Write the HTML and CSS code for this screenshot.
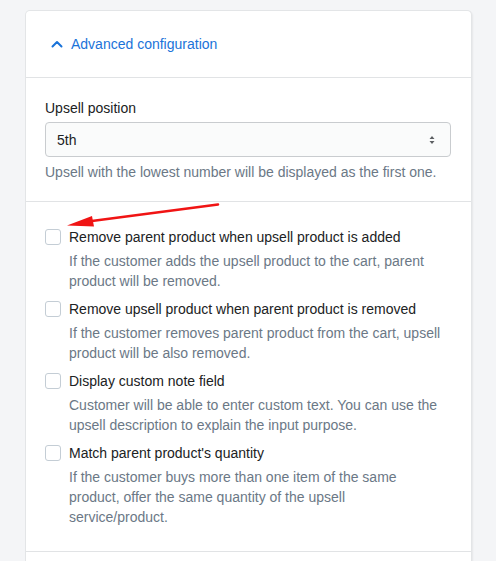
FILE: index.html
```html
<!DOCTYPE html>
<html lang="en">
<head>
<meta charset="utf-8">
<title>Advanced configuration</title>
<link rel="stylesheet" href="styles.css">
</head>
<body>
<div class="page">
  <div class="card">
    <div class="card-header">
      <button class="toggle" type="button">
        <svg class="chev" width="12" height="8" viewBox="0 0 12 8" aria-hidden="true"><path d="M1.5 6.5 L6 2 L10.5 6.5" fill="none" stroke="currentColor" stroke-width="2" stroke-linecap="round" stroke-linejoin="round"/></svg>
        <span>Advanced configuration</span>
      </button>
    </div>
    <div class="section">
      <label class="field-label">Upsell position</label>
      <div class="select">
        <span class="select-value">5th</span>
        <svg class="select-arrows" width="8" height="10" viewBox="0 0 8 10" aria-hidden="true"><path d="M4 1 L6.5 4 H1.5 Z M4 9 L1.5 6 H6.5 Z" fill="#5c5f62"/></svg>
      </div>
      <p class="help">Upsell with the lowest number will be displayed as the first one.</p>
    </div>
    <div class="section options">
      <div class="option">
        <div class="option-row"><span class="checkbox"></span><span class="option-label">Remove parent product when upsell product is added</span></div>
        <p class="option-help">If the customer adds the upsell product to the cart, parent product will be removed.</p>
      </div>
      <div class="option">
        <div class="option-row"><span class="checkbox"></span><span class="option-label">Remove upsell product when parent product is removed</span></div>
        <p class="option-help">If the customer removes parent product from the cart, upsell product will be also removed.</p>
      </div>
      <div class="option">
        <div class="option-row"><span class="checkbox"></span><span class="option-label">Display custom note field</span></div>
        <p class="option-help">Customer will be able to enter custom text. You can use the upsell description to explain the input purpose.</p>
      </div>
      <div class="option">
        <div class="option-row"><span class="checkbox"></span><span class="option-label">Match parent product's quantity</span></div>
        <p class="option-help narrow">If the customer buys more than one item of the same product, offer the same quantity of the upsell service/product.</p>
      </div>
    </div>
    <div class="section empty"></div>
  </div>
  <svg class="annot" width="496" height="561" viewBox="0 0 496 561" aria-hidden="true">
    <line x1="218" y1="204.5" x2="88" y2="221.5" stroke="#f01414" stroke-width="2.6" stroke-linecap="round"/>
    <path d="M67 225.5 L92 216 L94 226.5 Z" fill="#f01414"/>
  </svg>
</div>
</body>
</html>
```
FILE: styles.css
```css
html, body {
  margin: 0;
  padding: 0;
  background: #f4f5f7;
}
body {
  font-family: "Liberation Sans", Arial, sans-serif;
  font-size: 14px;
  line-height: 20px;
  color: #202223;
  -webkit-font-smoothing: antialiased;
}
.page {
  position: relative;
  width: 496px;
  height: 561px;
  overflow: hidden;
  padding: 10px 0 0 25px;
  box-sizing: border-box;
}
.card {
  width: 447px;
  background: #fff;
  border: 1px solid #e3e5e7;
  border-bottom: none;
  border-radius: 5px 5px 0 0;
  box-shadow: 1px 1px 2px rgba(0,0,0,0.06);
  box-sizing: border-box;
}
.card-header {
  height: 66px;
  display: flex;
  align-items: center;
  padding: 0 20px;
  border-bottom: 1px solid #e1e3e5;
}
.toggle {
  display: flex;
  align-items: center;
  gap: 8px;
  padding: 0 0 0 5px;
  margin: 0;
  border: none;
  background: none;
  font: inherit;
  color: #1a73d9;
  cursor: pointer;
}
.chev { display: block; margin-top: -1px; }
.section {
  padding: 20px 20px 19px 19px;
  border-bottom: 1px solid #e1e3e5;
}
.field-label {
  display: block;
  margin-bottom: 4px;
}
.select {
  height: 35px;
  border: 1px solid #c9cccf;
  border-radius: 4px;
  background: #fafbfb;
  display: flex;
  align-items: center;
  justify-content: space-between;
  padding: 0 14px 0 11px;
  box-sizing: border-box;
}
.select-arrows { display: block; }
.help {
  margin: 5px 0 0;
  color: #6b7886;
}
.options {
  padding: 25px 20px 24px 19px;
  display: flex;
  flex-direction: column;
  gap: 8px;
}
.option-row {
  display: flex;
  align-items: center;
  gap: 8px;
}
.checkbox {
  width: 16px;
  height: 16px;
  border: 1px solid #c4cdd5;
  border-radius: 3px;
  background: #fff;
  box-sizing: border-box;
  flex: none;
}
.option-help {
  margin: 4px 0 0 24px;
  color: #6b7886;
}
.option-help.narrow { max-width: 340px; }
.empty { height: 40px; border-bottom: none; }
.annot {
  position: absolute;
  left: 0;
  top: 0;
  pointer-events: none;
}
```
